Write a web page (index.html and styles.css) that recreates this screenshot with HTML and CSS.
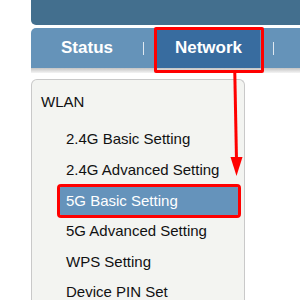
FILE: index.html
```html
<!DOCTYPE html>
<html>
<head>
<title>Router - Network</title>
<meta charset="utf-8">
<link rel="stylesheet" href="styles.css">
</head>
<body>

<div class="page">
    <div class="top"></div>
    <ul class="nav">
        <li class="tab">Status</li>
        <li class="sep"></li>
        <li class="tab on">Network</li>
        <li class="sep"></li>
    </ul>
    <div class="shade"></div>

    <div class="side">
        <div class="group">WLAN</div>
        <ul class="menu">
            <li>2.4G Basic Setting</li>
            <li>2.4G Advanced Setting</li>
            <li class="active">5G Basic Setting</li>
            <li>5G Advanced Setting</li>
            <li>WPS Setting</li>
            <li>Device PIN Set</li>
        </ul>
    </div>
</div>

<!-- annotation marks -->
<div class="mark"></div>
<svg class="arrow" width="300" height="300" viewBox="0 0 300 300">
    <line x1="234.8" y1="73" x2="236.5" y2="160" stroke="#f00" stroke-width="3"/>
    <polygon points="230.5,157 242.5,157 236.5,176" fill="#f00"/>
</svg>

</body>
</html>
```

FILE: styles.css
```css
*{margin:0;padding:0;}
ul,li{list-style:none;}
html,body{height:300px;overflow:hidden;}
body{background:#fff;font-family:"Liberation Sans",Arial,sans-serif;}
.page{padding-left:31px;}
.top{height:25px;background:#436f8e;border-bottom-left-radius:5px;margin-bottom:3px;}
.nav{display:flex;align-items:center;height:40px;background:#6593b9;border-top-left-radius:5px;}
.nav .tab{height:40px;line-height:40px;color:#fff;font-size:17px;font-weight:bold;text-align:center;}
.nav .tab:first-child{width:112px;}
.nav .on{width:103px;margin:0 13px;background:#386c9f;}
.nav .sep{width:1px;height:13px;background:#dfe8f0;}
.shade{height:5px;background:linear-gradient(#c4c4c4,#f4f4f4);margin-bottom:6px;}
.side{width:212px;height:208px;overflow:hidden;background:#f3f4f1;border:1px solid #c9c9c9;border-bottom:0;border-radius:6px 6px 0 0;padding-top:12px;}
.group{height:20px;line-height:20px;font-size:15px;color:#111;padding-left:9px;}
.menu{display:flex;flex-direction:column;gap:2.6px;margin:13.4px 6px 0 28px;padding-top:3px;margin-top:10.4px;}
.menu li{height:28px;line-height:28px;font-size:15px;color:#111;padding-left:6px;white-space:nowrap;}
.menu .active{background:#6593bb;color:#fff;outline:3px solid #f00;border-radius:1px;}
.mark{position:absolute;left:154px;top:27px;width:110px;height:46px;box-sizing:border-box;border:3px solid #f00;border-radius:2px;}
.arrow{position:absolute;left:0;top:0;}
```
